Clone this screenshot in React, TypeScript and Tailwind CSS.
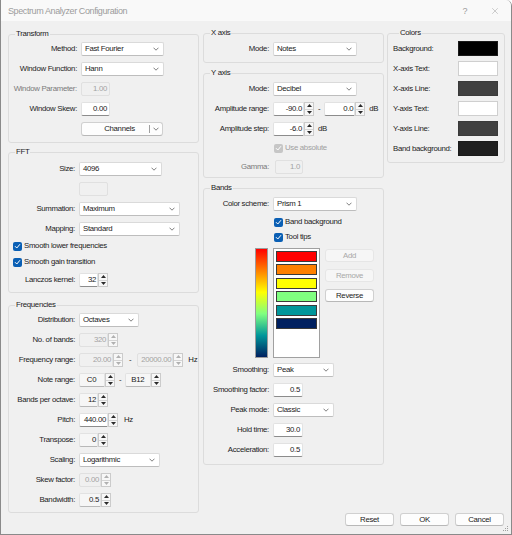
import type { ReactNode } from "react";
import { X } from "lucide-react";

const fieldStyles = {
  white: "bg-white border-[#e2e2e2] border-b-[#8c8c8c] text-[#1a1a1a]",
  flat: "bg-[#f6f6f6] border-[#e2e2e2] border-b-[#b8b8b8] text-[#1a1a1a]",
  off: "bg-[#f0f0f0] border-[#e0e0e0] text-[#a3a3a3]",
};

type Variant = keyof typeof fieldStyles;

function Chevron() {
  return (
    <svg width="6" height="4" viewBox="0 0 6 4" className="shrink-0">
      <path d="M0.5 0.7 L3 3.2 L5.5 0.7" fill="none" stroke="#5f5f5f" strokeWidth="0.8" />
    </svg>
  );
}

function Combo({ value, className }: { value: string; className: string }) {
  return (
    <div
      className={`flex h-[14px] items-center justify-between rounded-[2px] border border-[#dadada] border-b-[#bdbdbd] bg-white pl-[3px] pr-[4px] ${className}`}
    >
      <span>{value}</span>
      <Chevron />
    </div>
  );
}

function Field({ value, v = "white", className }: { value: string; v?: Variant; className: string }) {
  return (
    <div className={`flex h-[14px] items-center justify-end rounded-[2px] border pr-[2px] ${fieldStyles[v]} ${className}`}>
      {value}
    </div>
  );
}

function Arrows({ off }: { off?: boolean }) {
  const c = off ? "#b0b0b0" : "#2a2a2a";
  return (
    <div className="flex w-[10px] shrink-0 flex-col border border-[#cbcbcb] bg-[#f7f7f7]">
      <div className="flex flex-1 items-center justify-center border-b border-[#d4d4d4]">
        <svg width="5" height="3" viewBox="0 0 5 3">
          <path d="M2.5 0 L5 3 L0 3Z" fill={c} />
        </svg>
      </div>
      <div className="flex flex-1 items-center justify-center">
        <svg width="5" height="3" viewBox="0 0 5 3">
          <path d="M0 0 L5 0 L2.5 3Z" fill={c} />
        </svg>
      </div>
    </div>
  );
}

function Spin({
  value,
  v = "flat",
  className,
  center,
}: {
  value: string;
  v?: Variant;
  className: string;
  center?: boolean;
}) {
  return (
    <div className={`flex h-[14px] ${className}`}>
      <div
        className={`flex flex-1 items-center rounded-l-[2px] border pr-[1px] ${center ? "justify-center" : "justify-end"} ${fieldStyles[v]}`}
      >
        {value}
      </div>
      <Arrows off={v === "off"} />
    </div>
  );
}

function Check({ label, off }: { label: string; off?: boolean }) {
  return (
    <div className="flex h-[12px] items-center gap-[2px]">
      <span
        className={`flex h-[9px] w-[9px] items-center justify-center rounded-[2px] ${off ? "bg-[#c6c6c6]" : "bg-[#0a5fb4]"}`}
      >
        <svg width="7" height="6" viewBox="0 0 7 6">
          <path d="M1 3.2 L2.8 5 L6 1.2" fill="none" stroke="white" strokeWidth="1" />
        </svg>
      </span>
      <span className={off ? "text-[#a0a0a0]" : ""}>{label}</span>
    </div>
  );
}

function Group({ title, className, children }: { title: string; className: string; children: ReactNode }) {
  return (
    <fieldset className={`rounded-[3px] border border-[#dcdcdc] ${className}`}>
      <legend className="ml-[6px] px-[1px] leading-[10px]">{title}</legend>
      {children}
    </fieldset>
  );
}

function Row({
  label,
  lw,
  dim,
  className = "",
  children,
}: {
  label: string;
  lw: string;
  dim?: boolean;
  className?: string;
  children: ReactNode;
}) {
  return (
    <div className={`flex h-[14px] items-center ${className}`}>
      <span className={`mr-[4px] shrink-0 text-right ${lw} ${dim ? "text-[#7a7a7a]" : ""}`}>{label}</span>
      {children}
    </div>
  );
}

function Btn({ label, off }: { label: string; off?: boolean }) {
  return (
    <div
      className={`flex h-[13px] w-[49px] items-center justify-center rounded-[3px] border ${
        off ? "border-[#e6e6e6] bg-[#f6f6f6] text-[#a8a8a8]" : "border-[#d0d0d0] border-b-[#b8b8b8] bg-[#fdfdfd]"
      }`}
    >
      {label}
    </div>
  );
}

function Swatch({ label, color }: { label: string; color: string }) {
  return (
    <div className="flex h-[15px] items-center">
      <span className="flex-1">{label}</span>
      <span className={`h-[15px] w-[40px] border ${color}`} />
    </div>
  );
}

const bandColors = ["bg-[#ff0000]", "bg-[#ff8000]", "bg-[#ffff00]", "bg-[#80ff80]", "bg-[#00969a]", "bg-[#002060]"];

export default function App() {
  return (
    <div className="relative flex h-[535px] w-[512px] flex-col overflow-hidden rounded-tr-[6px] border-x border-b border-[#8a8a8a] bg-[#f0f0f0] font-['Liberation_Sans',Arial,sans-serif] text-[7.8px] leading-[10px] tracking-[-0.3px] text-[#1b1b1b]">
      {/* title bar */}
      <div className="flex h-[21px] shrink-0 items-center bg-[#f9f9f9] pl-[7px] pr-[11px] text-[9px] tracking-[-0.4px] text-[#9c9c9c]">
        <span className="flex-1">Spectrum Analyzer Configuration</span>
        <span className="mr-[23px]">?</span>
        <X size={10} strokeWidth={1.2} className="text-[#9c9c9c]" />
      </div>

      <div className="flex flex-1 gap-[4px] pb-[8px] pl-[7px] pr-[6px] pt-[7px]">
        {/* left column */}
        <div className="mt-[1px] flex w-[191px] shrink-0 flex-col">
          <Group title="Transform" className="flex flex-col gap-[6px] pb-[6px] pt-[3px]">
            <Row label="Method:" lw="w-[68px]">
              <Combo value="Fast Fourier" className="w-[83px]" />
            </Row>
            <Row label="Window Function:" lw="w-[68px]">
              <Combo value="Hann" className="w-[83px]" />
            </Row>
            <Row label="Window Parameter:" lw="w-[68px]" dim>
              <Field value="1.00" v="off" className="w-[29px]" />
            </Row>
            <Row label="Window Skew:" lw="w-[68px]">
              <Field value="0.00" className="w-[29px]" />
            </Row>
            <Row label="" lw="w-[68px]">
              <div className="flex h-[14px] w-[82px] items-center rounded-[3px] border border-[#d0d0d0] border-b-[#b8b8b8] bg-[#fdfdfd]">
                <span className="flex-1 pl-[8px] text-center">Channels</span>
                <span className="h-[8px] w-px bg-[#a0a0a0]" />
                <span className="mx-[3px]">
                  <Chevron />
                </span>
              </div>
            </Row>
          </Group>

          <Group title="FFT" className="mt-[4px] flex flex-col pb-[5px] pt-[5px]">
            <Row label="Size:" lw="w-[66px]">
              <Combo value="4096" className="w-[83px]" />
            </Row>
            <Row label="" lw="w-[66px]" className="mt-[6px]">
              <div className="h-[14px] w-[29px] rounded-[2px] border border-[#e0e0e0] bg-[#f0f0f0]" />
            </Row>
            <Row label="Summation:" lw="w-[66px]" className="mt-[6px]">
              <Combo value="Maximum" className="w-[101px]" />
            </Row>
            <Row label="Mapping:" lw="w-[66px]" className="mt-[6px]">
              <Combo value="Standard" className="w-[101px]" />
            </Row>
            <div className="mt-[4px] pl-[4px]">
              <Check label="Smooth lower frequencies" />
            </div>
            <div className="mt-[4px] pl-[4px]">
              <Check label="Smooth gain transition" />
            </div>
            <Row label="Lanczos kernel:" lw="w-[66px]" className="mt-[5px]">
              <Spin value="32" v="white" className="w-[29px]" />
            </Row>
          </Group>

          <Group title="Frequencies" className="mt-[7px] flex flex-col gap-[6px] pb-[5px] pt-[3px]">
            <Row label="Distribution:" lw="w-[66px]">
              <Combo value="Octaves" className="w-[60px]" />
            </Row>
            <Row label="No. of bands:" lw="w-[66px]">
              <Spin value="320" v="off" className="w-[39px]" />
            </Row>
            <Row label="Frequency range:" lw="w-[66px]">
              <Spin value="20.00" v="off" className="w-[44px]" />
              <span className="mx-[6px]">-</span>
              <Spin value="20000.00" v="off" className="w-[46px]" />
              <span className="ml-[5px]">Hz</span>
            </Row>
            <Row label="Note range:" lw="w-[66px]">
              <Spin value="C0" center className="w-[36px]" />
              <span className="mx-[4px]">-</span>
              <Spin value="B12" center className="w-[36px]" />
            </Row>
            <Row label="Bands per octave:" lw="w-[66px]">
              <Spin value="12" className="w-[29px]" />
            </Row>
            <Row label="Pitch:" lw="w-[66px]">
              <Spin value="440.00" v="white" className="w-[39px]" />
              <span className="ml-[6px]">Hz</span>
            </Row>
            <Row label="Transpose:" lw="w-[66px]">
              <Spin value="0" className="w-[29px]" />
            </Row>
            <Row label="Scaling:" lw="w-[66px]">
              <Combo value="Logarithmic" className="w-[81px]" />
            </Row>
            <Row label="Skew factor:" lw="w-[66px]">
              <Spin value="0.00" v="off" className="w-[32px]" />
            </Row>
            <Row label="Bandwidth:" lw="w-[66px]">
              <Spin value="0.5" className="w-[32px]" />
            </Row>
          </Group>
        </div>

        {/* right area */}
        <div className="flex flex-1 flex-col">
          <div className="flex gap-[3px]">
            {/* middle column */}
            <div className="flex w-[181px] shrink-0 flex-col">
              <Group title="X axis" className="pb-[6px] pt-[4px]">
                <Row label="Mode:" lw="w-[65px]">
                  <Combo value="Notes" className="w-[84px]" />
                </Row>
              </Group>

              <Group title="Y axis" className="mt-[5px] flex flex-col pb-[3px] pt-[4px]">
                <Row label="Mode:" lw="w-[65px]">
                  <Combo value="Decibel" className="w-[84px]" />
                </Row>
                <Row label="Amplitude range:" lw="w-[65px]" className="mt-[6px]">
                  <Spin value="-90.0" v="white" className="w-[41px]" />
                  <span className="mx-[4px]">-</span>
                  <Spin value="0.0" v="white" className="w-[41px]" />
                  <span className="ml-[4px]">dB</span>
                </Row>
                <Row label="Amplitude step:" lw="w-[65px]" className="mt-[6px]">
                  <Spin value="-6.0" v="white" className="w-[41px]" />
                  <span className="ml-[4px]">dB</span>
                </Row>
                <div className="mt-[6px] pl-[70px]">
                  <Check label="Use absolute" off />
                </div>
                <Row label="Gamma:" lw="w-[65px]" dim className="mt-[6px]">
                  <Field value="1.0" v="off" className="ml-[2px] w-[28px]" />
                </Row>
              </Group>

              <Group title="Bands" className="mt-[5px] flex flex-col pb-[7px] pt-[4px]">
                <Row label="Color scheme:" lw="w-[65px]">
                  <Combo value="Prism 1" className="w-[84px]" />
                </Row>
                <div className="mt-[5px] pl-[70px]">
                  <Check label="Band background" />
                </div>
                <div className="mt-[3px] pl-[70px]">
                  <Check label="Tool tips" />
                </div>
                <div className="mt-[5px] flex h-[110px] pl-[51px]">
                  <div className="w-[13px] border border-[#9c9c9c] bg-[linear-gradient(to_bottom,#ff0000,#ff8000,#ffff00,#80ff80,#00969a,#002060)]" />
                  <div className="ml-[5px] flex w-[47px] flex-col gap-[2.4px] border border-[#a0a0a0] bg-white p-[2px]">
                    {bandColors.map((c) => (
                      <div key={c} className={`h-[11px] w-[41px] border border-[#3a3a3a] ${c}`} />
                    ))}
                  </div>
                  <div className="ml-[5px] flex flex-col gap-[7px] pt-[1px]">
                    <Btn label="Add" off />
                    <Btn label="Remove" off />
                    <Btn label="Reverse" />
                  </div>
                </div>
                <Row label="Smoothing:" lw="w-[65px]" className="mt-[5px]">
                  <Combo value="Peak" className="w-[61px]" />
                </Row>
                <Row label="Smoothing factor:" lw="w-[65px]" className="mt-[6px]">
                  <Field value="0.5" className="w-[30px]" />
                </Row>
                <Row label="Peak mode:" lw="w-[65px]" className="mt-[6px]">
                  <Combo value="Classic" className="w-[61px]" />
                </Row>
                <Row label="Hold time:" lw="w-[65px]" className="mt-[6px]">
                  <Field value="30.0" className="w-[30px]" />
                </Row>
                <Row label="Acceleration:" lw="w-[65px]" className="mt-[6px]">
                  <Field value="0.5" className="w-[30px]" />
                </Row>
              </Group>
            </div>

            {/* colors column */}
            <Group title="Colors" className="flex w-[118px] flex-col gap-[5px] self-start pb-[6px] pl-[5px] pr-[6px] pt-[3px]">
              <Swatch label="Background:" color="border-[#1a1a1a] bg-black" />
              <Swatch label="X-axis Text:" color="border-[#cfcfcf] bg-white" />
              <Swatch label="X-axis Line:" color="border-[#3a3a3a] bg-[#404040]" />
              <Swatch label="Y-axis Text:" color="border-[#cfcfcf] bg-white" />
              <Swatch label="Y-axis Line:" color="border-[#3a3a3a] bg-[#404040]" />
              <Swatch label="Band background:" color="border-[#1a1a1a] bg-[#1f1f1f]" />
            </Group>
          </div>

          <div className="mt-auto flex justify-end gap-[6px] pr-[1px]">
            <Btn label="Reset" />
            <Btn label="OK" />
            <Btn label="Cancel" />
          </div>
        </div>
      </div>

      <svg width="6" height="6" viewBox="0 0 6 6" className="absolute bottom-[2px] right-[2px]">
        <rect x="4" y="0" width="1" height="1" fill="#a0a0a0" />
        <rect x="2" y="2" width="1" height="1" fill="#a0a0a0" />
        <rect x="4" y="2" width="1" height="1" fill="#a0a0a0" />
        <rect x="0" y="4" width="1" height="1" fill="#a0a0a0" />
        <rect x="2" y="4" width="1" height="1" fill="#a0a0a0" />
        <rect x="4" y="4" width="1" height="1" fill="#a0a0a0" />
      </svg>
    </div>
  );
}
